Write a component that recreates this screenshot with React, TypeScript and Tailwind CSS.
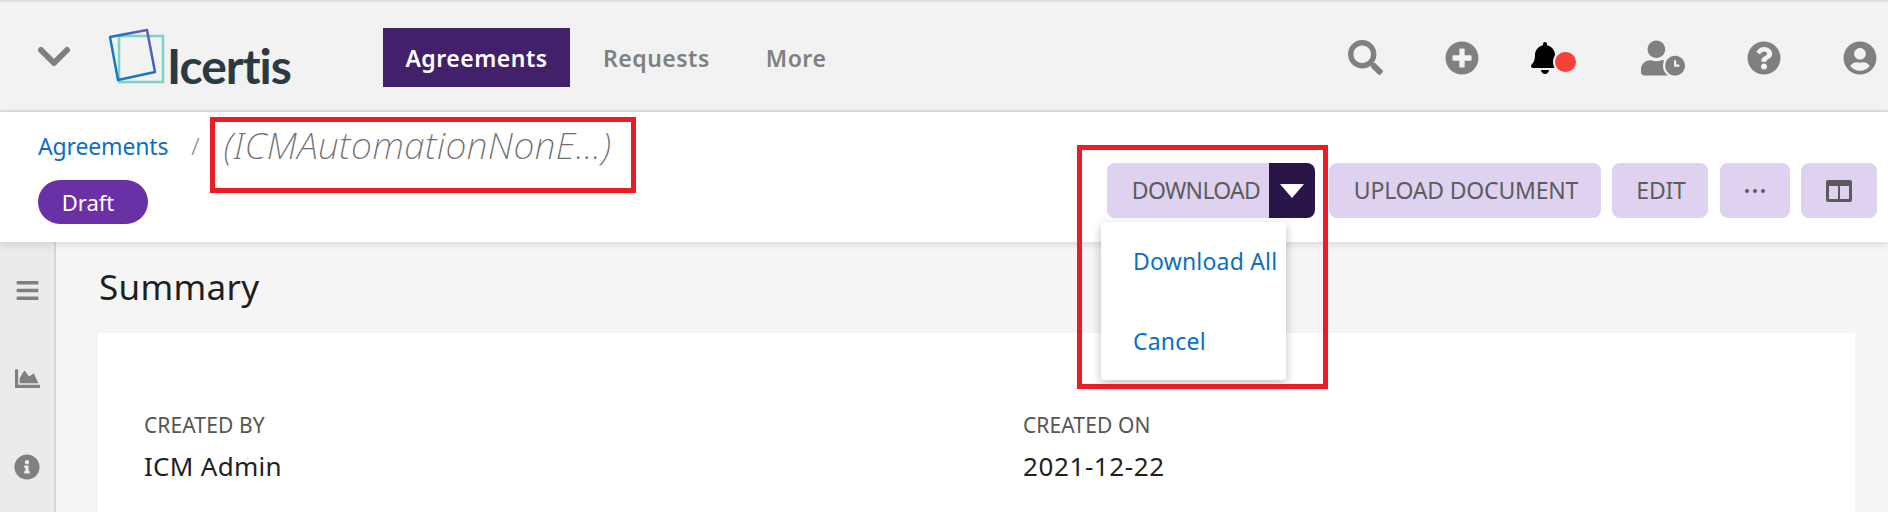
import { FaSearch, FaPlusCircle, FaBell, FaUserClock, FaQuestionCircle, FaUserCircle, FaBars, FaChartArea, FaInfoCircle } from "react-icons/fa";

const actions = [
  { label: "UPLOAD DOCUMENT", width: "w-[272px]", gap: "ml-[14px]" },
  { label: "EDIT", width: "w-[96px]", gap: "ml-[11px]" },
];

function Logo() {
  return (
    <div className="flex items-center w-[190px] h-[60px]">
      <svg width="58" height="56" viewBox="0 0 58 56" fill="none" className="shrink-0">
        <defs>
          <linearGradient id="logoEdge" x1="1" y1="0" x2="0" y2="1">
            <stop offset="0" stopColor="#8a4cad" />
            <stop offset="0.5" stopColor="#1478c4" />
            <stop offset="1" stopColor="#1478c4" />
          </linearGradient>
        </defs>
        <rect x="11" y="8" width="44" height="46" stroke="#7fd3c6" strokeWidth="2.5" />
        <path d="M2 9 L39 2 L47 44 L10 52 Z" stroke="url(#logoEdge)" strokeWidth="2.5" strokeLinejoin="round" />
      </svg>
      <span className="ml-[1px] mt-[19px] font-['Lato','Liberation_Sans',sans-serif] font-bold text-[48px] leading-none tracking-[-1px] text-[#2b3a42]">
        Icertis
      </span>
    </div>
  );
}

function LayoutIcon() {
  return (
    <svg width="26" height="22" viewBox="0 0 26 22">
      <path
        fill="#5a5a5a"
        fillRule="evenodd"
        d="M2 0h22a2 2 0 0 1 2 2v18a2 2 0 0 1-2 2H2a2 2 0 0 1-2-2V2a2 2 0 0 1 2-2Zm1 6v13h9V6H3Zm11 0v13h9V6h-9Z"
      />
    </svg>
  );
}

export default function App() {
  return (
    <div className="w-[1888px] h-[512px] overflow-hidden relative bg-[#f5f5f5] font-['Noto_Sans',sans-serif]">
      <header className="h-[112px] bg-[#f2f2f2] border-t-2 border-b-2 border-[#e0e0e0] flex items-center pl-[37px]">
        <svg width="34" height="22" viewBox="0 0 34 22" fill="none" className="shrink-0 mt-[2px]">
          <path d="M4 4 L17 17 L30 4" stroke="#7f7f7f" strokeWidth="6" strokeLinecap="round" strokeLinejoin="round" />
        </svg>
        <div className="ml-[37px]">
          <Logo />
        </div>
        <nav className="flex items-center ml-[85px] mt-[2px] text-[23px] font-semibold tracking-[0.5px]">
          <a className="w-[187px] h-[59px] pt-[2px] flex items-center justify-center bg-[#42216a] text-white">Agreements</a>
          <a className="ml-[33px] pt-[2px] text-[#808080]">Requests</a>
          <a className="ml-[56px] pt-[2px] text-[#808080]">More</a>
        </nav>
        <div className="ml-auto flex items-center text-[#808080] pr-[11px] mt-[3px]">
          <FaSearch className="w-[35px] h-[35px]" />
          <FaPlusCircle className="w-[34px] h-[34px] ml-[62px]" />
          <div className="relative w-[45px] h-[36px] ml-[52px] text-black">
            <FaBell className="w-[28px] h-[36px]" />
            <span className="absolute left-[24px] top-[12px] w-[21px] h-[20px] rounded-full bg-[#f44336] ring-2 ring-[#f2f2f2]" />
          </div>
          <FaUserClock className="w-[44px] h-[36px] ml-[65px]" />
          <FaQuestionCircle className="w-[34px] h-[34px] ml-[62px]" />
          <FaUserCircle className="w-[34px] h-[34px] ml-[62px]" />
        </div>
      </header>

      <section className="relative z-10 h-[130px] bg-white shadow-[0_2px_8px_rgba(0,0,0,0.12)] flex justify-between pl-[38px] pr-[11px]">
        <div>
          <div className="flex items-center h-[68px]">
            <a className="text-[23px] tracking-[-0.15px] text-[#0b6fc4]">Agreements</a>
            <span className="ml-[23px] text-[24px] font-light text-[#8a8a8a]">/</span>
            <span className="ml-[24px] text-[37px] font-extralight italic tracking-[0.4px] text-[#6f6f6f] relative top-[-1px]">(ICMAutomationNonE…)</span>
          </div>
          <span className="inline-flex items-center justify-center w-[110px] h-[44px] pr-[10px] rounded-full bg-[#6a30a5] text-white text-[22px]">
            Draft
          </span>
        </div>

        <div className="flex items-start pt-[51px] text-[23px] tracking-[-0.2px] text-[#5c5c5c]">
          <div className="relative flex w-[208px] h-[55px]">
            <button className="flex-1 flex items-center justify-center pl-[16px] tracking-[-0.7px] rounded-l-[8px] bg-[#dfd2f0]">DOWNLOAD</button>
            <button className="w-[46px] flex items-center justify-center rounded-r-[8px] bg-[#2a1548]">
              <svg width="24" height="14" viewBox="0 0 24 14">
                <path d="M0 0h24L12 14Z" fill="#fff" />
              </svg>
            </button>
            <div className="absolute left-[-6px] top-[59px] w-[185px] h-[158px] bg-white rounded-[4px] shadow-[0_3px_10px_rgba(0,0,0,0.25)] flex flex-col pl-[32px] pt-[23px] gap-[48px] tracking-[0.2px] text-[#0b6fc4]">
              <a className="leading-[32px] whitespace-nowrap">Download All</a>
              <a className="leading-[32px]">Cancel</a>
            </div>
          </div>
          {actions.map((a) => (
            <button key={a.label} className={`${a.width} ${a.gap} h-[55px] pl-[2px] rounded-[8px] bg-[#dfd2f0]`}>
              {a.label}
            </button>
          ))}
          <button className="ml-[12px] w-[70px] h-[55px] rounded-[8px] bg-[#dfd2f0] flex items-center justify-center gap-[4px]">
            <span className="w-[4px] h-[4px] rounded-full bg-[#5c5c5c]" />
            <span className="w-[4px] h-[4px] rounded-full bg-[#5c5c5c]" />
            <span className="w-[4px] h-[4px] rounded-full bg-[#5c5c5c]" />
          </button>
          <button className="ml-[11px] w-[76px] h-[55px] rounded-[8px] bg-[#dfd2f0] flex items-center justify-center">
            <LayoutIcon />
          </button>
        </div>
      </section>

      <div className="flex h-[270px]">
        <aside className="w-[56px] shrink-0 bg-[#ebebeb] border-r-2 border-[#d6d6d6] flex flex-col items-center text-[#808080] pt-[36px] gap-[63px]">
          <FaBars className="w-[25px] h-[25px]" />
          <FaChartArea className="w-[27px] h-[25px]" />
          <FaInfoCircle className="w-[26px] h-[26px]" />
        </aside>
        <main className="flex-1 pl-[42px] pr-[33px]">
          <h1 className="h-[91px] flex items-center pl-[1px] text-[35px] tracking-[0.3px] text-[#1f1f1f]">Summary</h1>
          <div className="h-[179px] bg-white pl-[46px] pt-[77px] grid grid-cols-[879px_1fr]">
            <div>
              <p className="text-[21px] leading-[30px] tracking-[0.1px] text-[#555]">CREATED BY</p>
              <p className="mt-[9px] text-[26px] leading-[34px] tracking-[0.3px] text-[#1f1f1f]">ICM Admin</p>
            </div>
            <div>
              <p className="text-[21px] leading-[30px] tracking-[0.1px] text-[#555]">CREATED ON</p>
              <p className="mt-[9px] text-[26px] leading-[34px] tracking-[0.6px] text-[#1f1f1f]">2021-12-22</p>
            </div>
          </div>
        </main>
      </div>

      {/* annotation boxes drawn over the screenshot */}
      <div className="absolute z-20 left-[210px] top-[117px] w-[426px] h-[76px] border-[5px] border-[#ed1c24]" />
      <div className="absolute z-20 left-[1077px] top-[145px] w-[251px] h-[244px] border-[5px] border-[#ed1c24]" />
    </div>
  );
}
